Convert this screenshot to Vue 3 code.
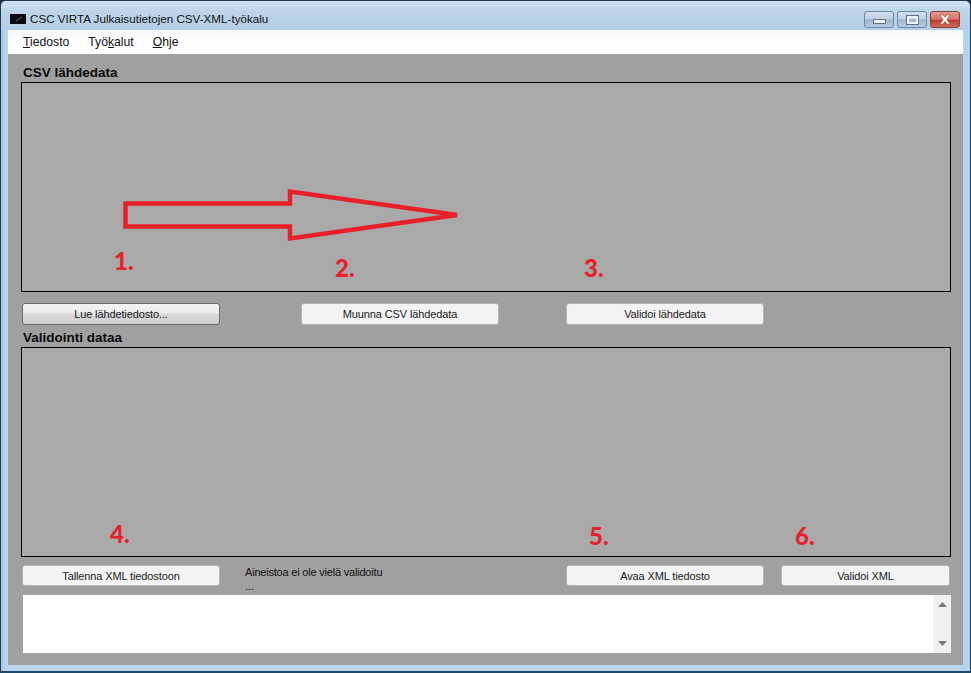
<script setup>
const menus = [
  { key: 'T', rest: 'iedosto', pre: '' },
  { key: 'k', rest: 'alut', pre: 'Työ' },
  { key: 'O', rest: 'hje', pre: '' }
]
const marks = [
  { n: '1.', x: 106, y: 192 },
  { n: '2.', x: 327, y: 199 },
  { n: '3.', x: 576, y: 199 },
  { n: '4.', x: 102, y: 465 },
  { n: '5.', x: 581, y: 467 },
  { n: '6.', x: 787, y: 467 }
]
</script>

<template>
  <div class="window">
    <header class="titlebar">
      <span class="appicon">
        <svg width="16" height="10" viewBox="0 0 16 10"><path d="M6 7c2-1 4-3 6-4" fill="none" stroke="#5a6a7a" stroke-width="1"/></svg>
      </span>
      <span class="title">CSC VIRTA Julkaisutietojen CSV-XML-työkalu</span>
      <div class="controls">
        <span class="ctl"><i class="min"></i></span>
        <span class="ctl"><i class="max"></i></span>
        <span class="ctl close">
          <svg width="16" height="11" viewBox="0 0 16 11"><path d="M3 1h3l2 2.400L10 1h3L9.800 5.500 13 10h-3L8 7.600 6 10H3l3.200-4.500z" fill="#fff" stroke="#7a3a30" stroke-width=".5"/></svg>
        </span>
      </div>
    </header>

    <nav class="menubar">
      <span v-for="m in menus" :key="m.key" class="menuitem">{{ m.pre }}<u>{{ m.key }}</u>{{ m.rest }}</span>
    </nav>

    <main class="client">
      <h2 class="label first">CSV lähdedata</h2>
      <section class="panel"></section>
      <div class="btnrow top">
        <button class="btn focus">Lue lähdetiedosto...</button>
        <button class="btn">Muunna CSV lähdedata</button>
        <button class="btn">Validoi lähdedata</button>
      </div>
      <h2 class="label">Validointi dataa</h2>
      <section class="panel"></section>
      <div class="btnrow bottom">
        <button class="btn">Tallenna XML tiedostoon</button>
        <div class="status"><div>Aineistoa ei ole vielä validoitu</div><div class="dots">...</div></div>
        <button class="btn">Avaa XML tiedosto</button>
        <button class="btn last">Validoi XML</button>
      </div>
      <div class="log">
        <div class="scroll">
          <svg width="9" height="5" viewBox="0 0 9 5"><path d="M4.500 0 9 5H0z" fill="#7d7d7d"/></svg>
          <svg width="9" height="5" viewBox="0 0 9 5"><path d="M0 0h9L4.500 5z" fill="#7d7d7d"/></svg>
        </div>
      </div>

      <svg class="arrow" width="340" height="60" viewBox="0 0 340 60">
        <path d="M3.500 17.500H168V5.500L335 29 168 52.500V40.500H3.500z" fill="none" stroke="#e8202a" stroke-width="4.500"/>
      </svg>
      <span v-for="m in marks" :key="m.n" class="mark" :style="{ left: m.x + 'px', top: m.y + 'px' }">{{ m.n }}</span>
    </main>
  </div>
</template>

<style scoped>
.window {
  width: 971px;
  height: 673px;
  box-sizing: border-box;
  padding: 0 7px 6px;
  display: flex;
  flex-direction: column;
  background: linear-gradient(90deg, #a9c6e2 0, #bcd6ee 6px, #bcd6ee 960px, #a8d4f0 100%);
  border: 1px solid #24384c;
  border-radius: 6px 6px 0 0;
  border-bottom: 2px solid #1e4a6a;
  font-family: "Liberation Sans", Arial, sans-serif;
  overflow: hidden;
}
.titlebar {
  height: 29px;
  flex: none;
  display: flex;
  align-items: flex-start;
  margin: 0 -7px;
  padding: 0 10px 0 9px;
  background: linear-gradient(180deg, #d0e2f2 0, #bcd3e8 40%, #b4cee6 100%);
}
.appicon {
  width: 16px;
  height: 10px;
  background: #0a0a12;
  margin: 13px 4px 0 0;
  display: flex;
}
.title {
  font-size: 11.65px;
  line-height: 14px;
  color: #111;
  margin-top: 11px;
}
.controls {
  margin-left: auto;
  display: flex;
  gap: 3px;
  margin-top: 10px;
}
.ctl {
  width: 30px;
  height: 17px;
  box-sizing: border-box;
  border: 1px solid #6f8aa6;
  border-radius: 3px;
  display: flex;
  align-items: center;
  justify-content: center;
  background: linear-gradient(180deg, #d2e0ee 0, #bccfe2 48%, #9db5cc 52%, #b7cbde 100%);
}
.ctl.close {
  border-color: #8a3f36;
  background: linear-gradient(180deg, #e39a8d 0, #d8746a 48%, #bd3b2c 55%, #d06a55 100%);
}
.min {
  width: 11px;
  height: 3px;
  background: #eef3f8;
  border: 1px solid #5f7388;
  margin-top: 4px;
}
.max {
  width: 7px;
  height: 4px;
  border: 2px solid #eef3f8;
  outline: 1px solid #5f7388;
}
.menubar {
  height: 24px;
  flex: none;
  display: flex;
  align-items: center;
  gap: 19px;
  padding-left: 15px;
  box-sizing: border-box;
  background: linear-gradient(180deg, #f5f6f7 0, #ffffff 60%, #fdfdfd 100%);
  font-size: 12.2px;
  color: #111;
}
.client {
  position: relative;
  flex: 1;
  background: #a0a0a0;
  padding-left: 13px;
  min-height: 0;
}
.label {
  margin: 0 0 2px 2px;
  height: 14px;
  font-size: 13.5px;
  line-height: 14px;
  font-weight: bold;
  color: #0a0a0a;
}
.label.first {
  padding-top: 12px;
}
.panel {
  width: 930px;
  height: 210px;
  box-sizing: border-box;
  border: 1px solid #000;
  background: #a9a9a9;
}
.btnrow {
  display: flex;
  align-items: flex-start;
  padding-left: 1px;
}
.btnrow.top {
  padding-top: 11px;
  height: 22px;
  margin-bottom: 6px;
}
.btnrow.bottom {
  padding-top: 8px;
  height: 22px;
  margin-bottom: 8px;
}
.btnrow.bottom .btn {
  height: 21px;
}
.btn {
  width: 198px;
  height: 22px;
  box-sizing: border-box;
  padding: 0;
  border: 1px solid #b4b4b4;
  border-radius: 3px;
  background: #f3f3f3;
  font-family: "Liberation Sans", Arial, sans-serif;
  font-size: 11px;
  letter-spacing: -0.12px;
  color: #1a1a1a;
}
.btn.focus {
  background: linear-gradient(180deg, #f4f4f4 0, #ececec 45%, #d9d9d9 50%, #cfcfcf 100%);
  border-color: #6e6e6e;
}
.btnrow.top .btn:nth-child(2) {
  margin-left: 81px;
}
.btnrow.top .btn:nth-child(3) {
  margin-left: 67px;
}
.btnrow.bottom .btn.last {
  margin-left: 17px;
  width: 169px;
}
.status {
  width: 346px;
  padding-left: 25px;
  box-sizing: border-box;
  font-size: 11px;
  letter-spacing: -0.2px;
  line-height: 14px;
  color: #111;
}
.dots {
  line-height: 15px;
}
.log {
  width: 928px;
  height: 58px;
  margin-left: 2px;
  background: #fff;
  display: flex;
  justify-content: flex-end;
}
.scroll {
  width: 18px;
  background: #efefef;
  display: flex;
  flex-direction: column;
  align-items: center;
  justify-content: space-between;
  padding: 7px 0;
  box-sizing: border-box;
}
.arrow {
  position: absolute;
  left: 114px;
  top: 132px;
}
.mark {
  position: absolute;
  font-family: Lato, "Open Sans", sans-serif;
  font-weight: 900;
  font-size: 24px;
  line-height: 30px;
  color: #e8202a;
}
</style>
<style>
html, body { margin: 0; background: #1f2d3a; overflow: hidden; }
</style>
